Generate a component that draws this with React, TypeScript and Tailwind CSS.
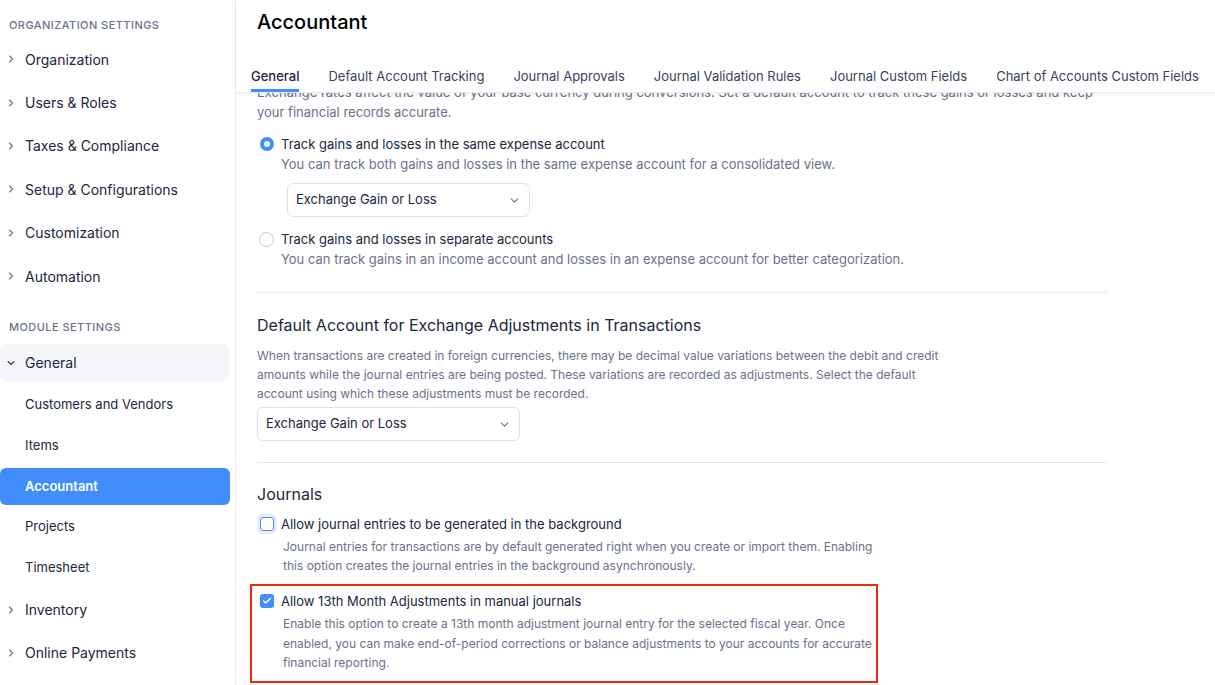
import { ChevronRight, ChevronDown, Check } from "lucide-react";

const orgItems = [
  "Organization",
  "Users & Roles",
  "Taxes & Compliance",
  "Setup & Configurations",
  "Customization",
  "Automation",
];

const generalSub = ["Customers and Vendors", "Items", "Accountant", "Projects", "Timesheet"];

const tabs = [
  "General",
  "Default Account Tracking",
  "Journal Approvals",
  "Journal Validation Rules",
  "Journal Custom Fields",
  "Chart of Accounts Custom Fields",
];

function SectionLabel({ children, className }: { children: string; className: string }) {
  return (
    <div className={`pl-[9px] text-[11px] font-medium uppercase leading-[14px] tracking-[0.04em] text-[#6c718a] ${className}`}>
      {children}
    </div>
  );
}

function NavItem({ label }: { label: string }) {
  return (
    <div className="flex h-[43.4px] items-center text-[14px] text-[#21263c]">
      <ChevronRight size={12} strokeWidth={2.2} className="ml-[5px] mr-[8px] text-[#6c718a]" />
      <span>{label}</span>
    </div>
  );
}

function Sidebar() {
  return (
    <aside className="flex h-full w-[236px] shrink-0 flex-col border-r border-[#ebebf2] bg-white pr-[5px]">
      <SectionLabel className="h-[37.5px] pt-[18px]">Organization Settings</SectionLabel>
      {orgItems.map((i) => (
        <NavItem key={i} label={i} />
      ))}
      <SectionLabel className="h-[46px] pt-[22px]">Module Settings</SectionLabel>
      <div className="flex h-[38px] items-center rounded-lg bg-[#f5f6fa] text-[14px] text-[#21263c]">
        <ChevronDown size={12} strokeWidth={2.2} className="ml-[5px] mr-[8px] text-[#3c4257]" />
        <span>General</span>
      </div>
      <div className="mt-[3px] flex flex-col">
        {generalSub.map((s) => (
          <div key={s} className="flex h-[40.6px] items-center py-[2px]">
            {s === "Accountant" ? (
              <div className="flex h-full w-full items-center rounded-md bg-[#408dfb] pl-[25px] text-[13px] font-semibold text-white">
                {s}
              </div>
            ) : (
              <div className="pl-[25px] text-[13px] text-[#21263c]">{s}</div>
            )}
          </div>
        ))}
      </div>
      <div>
        <NavItem label="Inventory" />
        <NavItem label="Online Payments" />
      </div>
    </aside>
  );
}

function Select({ className }: { className: string }) {
  return (
    <div
      className={`flex h-[34px] items-center justify-between rounded-md border border-[#dfe1ea] bg-white pl-[8px] pr-[8px] text-[13px] text-[#21263c] ${className}`}
    >
      <span>Exchange Gain or Loss</span>
      <ChevronDown size={13} strokeWidth={2} className="text-[#6c718a]" />
    </div>
  );
}

function Radio({ checked }: { checked: boolean }) {
  return checked ? (
    <span className="h-[14px] w-[14px] shrink-0 rounded-full border-[4px] border-[#408dfb] bg-white" />
  ) : (
    <span className="h-[15px] w-[15px] shrink-0 rounded-full border border-[#c5c8d3] bg-white" />
  );
}

export default function App() {
  return (
    <div className="flex h-[685px] w-[1215px] overflow-hidden bg-white font-['Inter',sans-serif] text-[#21263c]">
      <Sidebar />
      <main className="flex min-w-0 flex-1 flex-col">
        <header className="relative z-10 border-b border-[#ebebf2] bg-white shadow-[0_2px_4px_rgba(30,35,60,0.06)]">
          <h1 className="flex h-[44px] items-center pl-[21px] text-[20px] font-medium text-black">Accountant</h1>
          <nav className="mt-[22px] flex gap-[29px] pl-[15px]">
            {tabs.map((t, i) => (
              <div
                key={t}
                className={`border-b-[3px] pb-[3px] text-[13px] leading-[20px] ${
                  i === 0 ? "border-[#408dfb] font-medium text-[#21263c]" : "border-transparent text-[#3c4257]"
                }`}
              >
                {t}
              </div>
            ))}
          </nav>
        </header>
        <div className="flex-1 overflow-hidden">
          <div className="-mt-[11px] w-[871px] pl-[21px]">
            <p className="text-[13px] leading-[20px] text-[#6c718a]">
              Exchange rates affect the value of your base currency during conversions. Set a default account to track these gains or losses and keep your financial records accurate.
            </p>

            <div className="mt-[12px] flex items-center gap-[7px] pl-[3px] text-[13px] leading-[20px]">
              <Radio checked />
              <span>Track gains and losses in the same expense account</span>
            </div>
            <p className="pl-[24px] text-[13px] leading-[20px] text-[#6c718a]">
              You can track both gains and losses in the same expense account for a consolidated view.
            </p>
            <Select className="ml-[30px] mt-[9px] w-[243px]" />

            <div className="mt-[12px] flex items-center gap-[7px] pl-[2px] text-[13px] leading-[20px]">
              <Radio checked={false} />
              <span>Track gains and losses in separate accounts</span>
            </div>
            <p className="pl-[24px] text-[13px] leading-[20px] text-[#6c718a]">
              You can track gains in an income account and losses in an expense account for better categorization.
            </p>

            <div className="mt-[23px] border-t border-[#e5e6ec]" />

            <h2 className="mt-[20px] text-[16px] leading-[24px] text-[#21263c]">
              Default Account for Exchange Adjustments in Transactions
            </h2>
            <p className="mt-[9px] w-[690px] text-[12px] leading-[19px] text-[#6c718a]">
              When transactions are created in foreign currencies, there may be decimal value variations between the debit and credit amounts while the journal entries are being posted. These variations are recorded as adjustments. Select the default account using which these adjustments must be recorded.
            </p>
            <Select className="mt-[4px] w-[263px]" />

            <div className="mt-[21px] border-t border-[#e5e6ec]" />

            <h2 className="mt-[19px] text-[16px] leading-[24px] text-[#21263c]">Journals</h2>

            <div className="mt-[8px] flex items-center gap-[4px] text-[13px] leading-[20px]">
              <span className="flex h-[20px] w-[20px] shrink-0 items-center justify-center rounded-[5px] bg-[#e6efff]">
                <span className="h-[14px] w-[14px] rounded-[3px] border border-[#408dfb] bg-white" />
              </span>
              <span>Allow journal entries to be generated in the background</span>
            </div>
            <p className="mt-[3px] w-[620px] pl-[26px] text-[12px] leading-[19px] text-[#6c718a]">
              Journal entries for transactions are by default generated right when you create or import them. Enabling this option creates the journal entries in the background asynchronously.
            </p>

            <div className="-ml-[7px] mt-[9px] w-[628px] border-2 border-[#f0290e] pb-[8px] pl-[5px] pt-[5px]">
              <div className="flex items-center gap-[4px] text-[13px] leading-[20px]">
                <span className="flex h-[20px] w-[20px] shrink-0 items-center justify-center">
                  <span className="flex h-[14px] w-[14px] items-center justify-center rounded-[3px] bg-[#408dfb]">
                    <Check size={10} strokeWidth={3.5} className="text-white" />
                  </span>
                </span>
                <span>Allow 13th Month Adjustments in manual journals</span>
              </div>
              <p className="mt-[3px] pl-[26px] pr-[4px] text-[12px] leading-[19.5px] text-[#6c718a]">
                Enable this option to create a 13th month adjustment journal entry for the selected fiscal year. Once enabled, you can make end-of-period corrections or balance adjustments to your accounts for accurate financial reporting.
              </p>
            </div>
          </div>
        </div>
      </main>
    </div>
  );
}
